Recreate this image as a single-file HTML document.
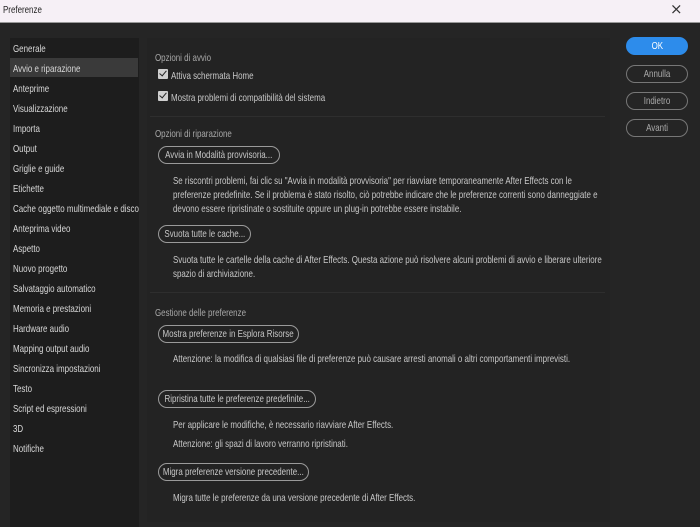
<!DOCTYPE html>
<html><head><meta charset="utf-8"><style>
*{margin:0;padding:0;box-sizing:border-box}
body{width:700px;height:527px;background:#252525;position:relative;overflow:hidden;font-family:"Liberation Sans",sans-serif;font-size:10.2px;color:#c8c8c8}
.t{position:absolute;white-space:nowrap;line-height:12px;margin-top:1.5px;transform:scaleX(.78);transform-origin:0 0}
#tb{position:absolute;left:0;top:0;width:700px;height:23px;background:#f6f0f6;border-bottom:1px solid #999}
#side{position:absolute;left:10px;top:38px;width:129px;height:489px;background:#1d1d1d}
#sel{position:absolute;left:10px;top:58px;width:128px;height:19px;background:#3a3a3a}
#panel{position:absolute;left:147px;top:38px;width:463px;height:484px;background:#232323}
.sep{position:absolute;left:150px;width:455px;height:1px;background:#2e2e2e}
.btn,.rb{position:absolute;height:18px;border:1.5px solid #9a9a9a;border-radius:9px;color:#c8c8c8;display:flex;justify-content:center;align-items:center;white-space:nowrap}
.btn{left:158px}
.btn span,.rb span{display:inline-block;transform:scaleX(.78)}
.rb{left:626px;width:62px;border-color:#777;color:#aaa}
.cb{position:absolute;left:158px;width:10px;height:10px;background:#cfcfcf;border-radius:1px}
.cb:after{content:"";position:absolute;left:3px;top:0px;width:3px;height:6px;border:solid #222;border-width:0 1.5px 1.5px 0;transform:rotate(40deg)}
.h{color:#a8a8a8}
.s{color:#d8d8d8}
</style></head><body>
<div id="tb"></div>
<div class="t" style="left:3px;top:3px;color:#222">Preferenze</div>
<div class="t" style="left:670px;top:1px;color:#333;font-size:15px;font-family:'DejaVu Sans',sans-serif;transform:none">×</div>
<div id="side"></div><div id="sel"></div>
<div class="t s" style="left:13px;top:42px">Generale</div>
<div class="t s" style="left:13px;top:62px">Avvio e riparazione</div>
<div class="t s" style="left:13px;top:82px">Anteprime</div>
<div class="t s" style="left:13px;top:102px">Visualizzazione</div>
<div class="t s" style="left:13px;top:122px">Importa</div>
<div class="t s" style="left:13px;top:142px">Output</div>
<div class="t s" style="left:13px;top:162px">Griglie e guide</div>
<div class="t s" style="left:13px;top:182px">Etichette</div>
<div class="t s" style="left:13px;top:202px">Cache oggetto multimediale e disco</div>
<div class="t s" style="left:13px;top:222px">Anteprima video</div>
<div class="t s" style="left:13px;top:242px">Aspetto</div>
<div class="t s" style="left:13px;top:262px">Nuovo progetto</div>
<div class="t s" style="left:13px;top:282px">Salvataggio automatico</div>
<div class="t s" style="left:13px;top:302px">Memoria e prestazioni</div>
<div class="t s" style="left:13px;top:322px">Hardware audio</div>
<div class="t s" style="left:13px;top:342px">Mapping output audio</div>
<div class="t s" style="left:13px;top:362px">Sincronizza impostazioni</div>
<div class="t s" style="left:13px;top:382px">Testo</div>
<div class="t s" style="left:13px;top:402px">Script ed espressioni</div>
<div class="t s" style="left:13px;top:422px">3D</div>
<div class="t s" style="left:13px;top:442px">Notifiche</div>

<div id="panel"></div>
<div class="t h" style="left:155px;top:51px">Opzioni di avvio</div>
<div class="cb" style="top:69px"></div><div class="t" style="left:171px;top:69px">Attiva schermata Home</div>
<div class="cb" style="top:91px"></div><div class="t" style="left:171px;top:91px">Mostra problemi di compatibilità del sistema</div>
<div class="sep" style="top:116px"></div>
<div class="t h" style="left:155px;top:127px">Opzioni di riparazione</div>
<div class="btn" style="top:146px;width:122px"><span>Avvia in Modalità provvisoria...</span></div>
<div class="t" style="left:173px;top:174px">Se riscontri problemi, fai clic su "Avvia in modalità provvisoria" per riavviare temporaneamente After Effects con le</div>
<div class="t" style="left:173px;top:188px">preferenze predefinite. Se il problema è stato risolto, ciò potrebbe indicare che le preferenze correnti sono danneggiate e</div>
<div class="t" style="left:173px;top:202px">devono essere ripristinate o sostituite oppure un plug-in potrebbe essere instabile.</div>
<div class="btn" style="top:225px;width:93px"><span>Svuota tutte le cache...</span></div>
<div class="t" style="left:173px;top:253px">Svuota tutte le cartelle della cache di After Effects. Questa azione può risolvere alcuni problemi di avvio e liberare ulteriore</div>
<div class="t" style="left:173px;top:267px">spazio di archiviazione.</div>
<div class="sep" style="top:292px"></div>
<div class="t h" style="left:155px;top:306px">Gestione delle preferenze</div>
<div class="btn" style="top:325px;width:141px"><span>Mostra preferenze in Esplora Risorse</span></div>
<div class="t" style="left:173px;top:352px">Attenzione: la modifica di qualsiasi file di preferenze può causare arresti anomali o altri comportamenti imprevisti.</div>
<div class="btn" style="top:390px;width:158px"><span>Ripristina tutte le preferenze predefinite...</span></div>
<div class="t" style="left:173px;top:418px">Per applicare le modifiche, è necessario riavviare After Effects.</div>
<div class="t" style="left:173px;top:437px">Attenzione: gli spazi di lavoro verranno ripristinati.</div>
<div class="btn" style="top:463px;width:151px"><span>Migra preferenze versione precedente...</span></div>
<div class="t" style="left:173px;top:491px">Migra tutte le preferenze da una versione precedente di After Effects.</div>

<div class="rb" style="top:37px;background:#2d8ceb;border-color:#2d8ceb;color:#fff"><span>OK</span></div>
<div class="rb" style="top:65px"><span>Annulla</span></div>
<div class="rb" style="top:92px"><span>Indietro</span></div>
<div class="rb" style="top:119px"><span>Avanti</span></div>
</body></html>
